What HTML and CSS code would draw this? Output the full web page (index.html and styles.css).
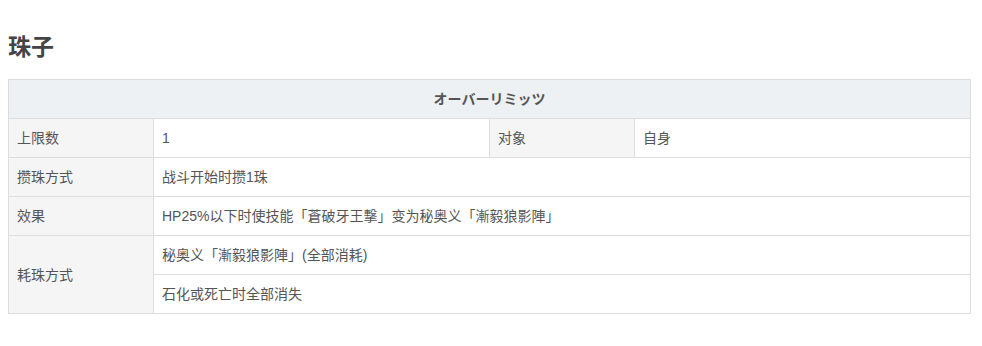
FILE: index.html
```html
<!DOCTYPE html>
<html lang="zh">
<head>
<meta charset="utf-8">
<link rel="stylesheet" href="styles.css">
</head>
<body>
<h2 class="title">珠子</h2>
<table class="orb">
  <colgroup>
    <col class="c1"><col class="c2"><col class="c3"><col class="c4">
  </colgroup>
  <thead>
    <tr><th colspan="4" class="head">オーバーリミッツ</th></tr>
  </thead>
  <tbody>
    <tr>
      <td class="lab">上限数</td>
      <td>1</td>
      <td class="lab">对象</td>
      <td>自身</td>
    </tr>
    <tr>
      <td class="lab">攒珠方式</td>
      <td colspan="3">战斗开始时攒1珠</td>
    </tr>
    <tr>
      <td class="lab">效果</td>
      <td colspan="3">HP25%以下时使技能「蒼破牙王撃」变为秘奥义「漸毅狼影陣」</td>
    </tr>
    <tr>
      <td class="lab" rowspan="2">耗珠方式</td>
      <td colspan="3">秘奥义「漸毅狼影陣」(全部消耗)</td>
    </tr>
    <tr>
      <td colspan="3">石化或死亡时全部消失</td>
    </tr>
  </tbody>
</table>
</body>
</html>
```
FILE: styles.css
```css
body {
  margin: 8px;
  font-family: "Liberation Sans", "Noto Sans CJK SC", sans-serif;
  color: #555;
  background: #fff;
}
.title {
  margin: 23px 0 16px;
  font-size: 23px;
  line-height: 32px;
  font-weight: bold;
  color: #444;
}
.orb {
  width: 961px;
  border-collapse: collapse;
  table-layout: fixed;
  font-size: 14px;
}
.c1, .c3 { width: 145px; }
.c2, .c4 { width: 336px; }
.orb th, .orb td {
  border: 1px solid #ddd;
  padding: 9px 8px;
  line-height: 20px;
  text-align: left;
  vertical-align: middle;
}
.orb th.head {
  background: #eef1f4;
  text-align: center;
  font-weight: bold;
  color: #555;
}
.orb td.lab {
  background: #f5f5f5;
}
```
